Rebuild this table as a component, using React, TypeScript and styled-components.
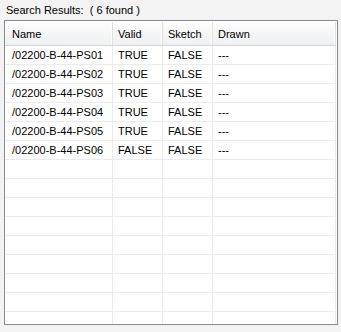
import React from 'react';
import styled, { createGlobalStyle } from 'styled-components';

const GlobalStyle = createGlobalStyle`
   html, body {
      margin: 0;
      padding: 0;
      background: #f3f3f3;
   }
   body {
      font-family: 'Liberation Sans', Arial, sans-serif;
      font-size: 11px;
      color: #000;
   }
`;

const Page = styled.div`
   display: flex;
   flex-direction: column;
   width: 341px;
   height: 332px;
   padding: 4px 3px 7px 4px;
   box-sizing: border-box;
`;

const Caption = styled.div`
   height: 16px;
   line-height: 13px;
   padding-left: 2px;
   white-space: pre;
`;

const Panel = styled.div`
   flex: 1;
   display: flex;
   flex-direction: column;
   border: 1px solid #868b94;
   background: #fff;
   overflow: hidden;
   padding-right: 1px;
`;

const COLS = '108px 50px 50px 123px';

const HeaderRow = styled.div`
   display: grid;
   grid-template-columns: ${COLS};
   height: 23px;
   border-top: 1px solid #fff;
   border-bottom: 1px solid #d5d5d5;
   background: linear-gradient(#ffffff, #f6f6f7 50%, #eff0f2);
   flex-shrink: 0;
`;

const HeaderCell = styled.div<{ $first?: boolean }>`
   display: flex;
   align-items: center;
   padding-left: ${(p) => (p.$first ? '7px' : '5px')};
   border-right: 1px solid #dedfe1;
   box-shadow: inset -1px 0 0 #fdfdfd;
`;

const Row = styled.div`
   display: grid;
   grid-template-columns: ${COLS};
   height: 18px;
   border-bottom: 1px solid #ebebeb;
   flex-shrink: 0;
`;

const Cell = styled.div<{ $first?: boolean }>`
   display: flex;
   align-items: center;
   padding-left: ${(p) => (p.$first ? '7px' : '5px')};
   border-right: 1px solid #ebebeb;
   white-space: nowrap;
   overflow: hidden;
`;

const results = [
   { name: '/02200-B-44-PS01', valid: 'TRUE', sketch: 'FALSE', drawn: '---' },
   { name: '/02200-B-44-PS02', valid: 'TRUE', sketch: 'FALSE', drawn: '---' },
   { name: '/02200-B-44-PS03', valid: 'TRUE', sketch: 'FALSE', drawn: '---' },
   { name: '/02200-B-44-PS04', valid: 'TRUE', sketch: 'FALSE', drawn: '---' },
   { name: '/02200-B-44-PS05', valid: 'TRUE', sketch: 'FALSE', drawn: '---' },
   { name: '/02200-B-44-PS06', valid: 'FALSE', sketch: 'FALSE', drawn: '---' },
];

const TOTAL_ROWS = 15;

const App = () => {
   const rows = [
      ...results,
      ...Array.from({ length: TOTAL_ROWS - results.length }, () => null),
   ];

   return (
      <Page>
         <GlobalStyle />
         <Caption>Search Results:  ( {results.length} found )</Caption>
         <Panel>
            <HeaderRow>
               <HeaderCell $first>Name</HeaderCell>
               <HeaderCell>Valid</HeaderCell>
               <HeaderCell>Sketch</HeaderCell>
               <HeaderCell>Drawn</HeaderCell>
            </HeaderRow>
            {rows.map((r, i) => (
               <Row key={i}>
                  <Cell $first>{r?.name}</Cell>
                  <Cell>{r?.valid}</Cell>
                  <Cell>{r?.sketch}</Cell>
                  <Cell>{r?.drawn}</Cell>
               </Row>
            ))}
         </Panel>
      </Page>
   );
};

export default App;
